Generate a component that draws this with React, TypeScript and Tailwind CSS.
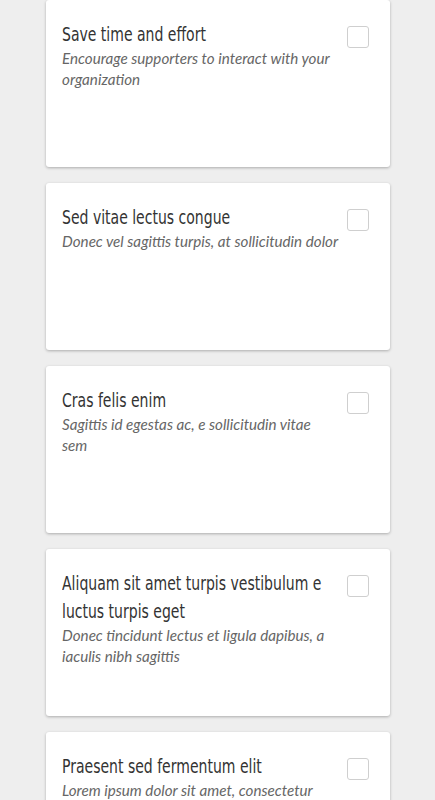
const items = [
  { title: "Save time and effort", text: "Encourage supporters to interact with your organization" },
  { title: "Sed vitae lectus congue", text: "Donec vel sagittis turpis, at sollicitudin dolor" },
  { title: "Cras felis enim", text: "Sagittis id egestas ac, e sollicitudin vitae sem" },
  { title: "Aliquam sit amet turpis vestibulum e luctus turpis eget", text: "Donec tincidunt lectus et ligula dapibus, a iaculis nibh sagittis" },
  { title: "Praesent sed fermentum elit", text: "Lorem ipsum dolor sit amet, consectetur adipiscing elit" },
];

export default function App() {
  return (
    <div className="h-[800px] overflow-hidden bg-[#eeeeee] pl-[46px] pr-[45px]">
      <div className="flex flex-col gap-4">
        {items.map((it) => (
          <div key={it.title} className="flex h-[167px] shrink-0 items-start gap-2 rounded-[3px] bg-white pl-4 pr-5 pt-[20px] shadow-[0_1px_3px_rgba(0,0,0,0.28)]">
            <div className="w-[277px] min-w-0">
              {/* condensed face squeezed to match the narrow heading font */}
              <div className="w-[338px] origin-left scale-x-[0.82] font-['DejaVu_Sans_Condensed',sans-serif] text-[19px] font-light leading-[28px] text-[#333]">{it.title}</div>
              <div className="font-['Lato',sans-serif] text-[15.2px] italic leading-[21px] text-[#666]">{it.text}</div>
            </div>
            <span className="mt-[6px] h-[22px] w-[22px] shrink-0 rounded-[3px] border border-[#cfcfcf] bg-white" />
          </div>
        ))}
      </div>
    </div>
  );
}
